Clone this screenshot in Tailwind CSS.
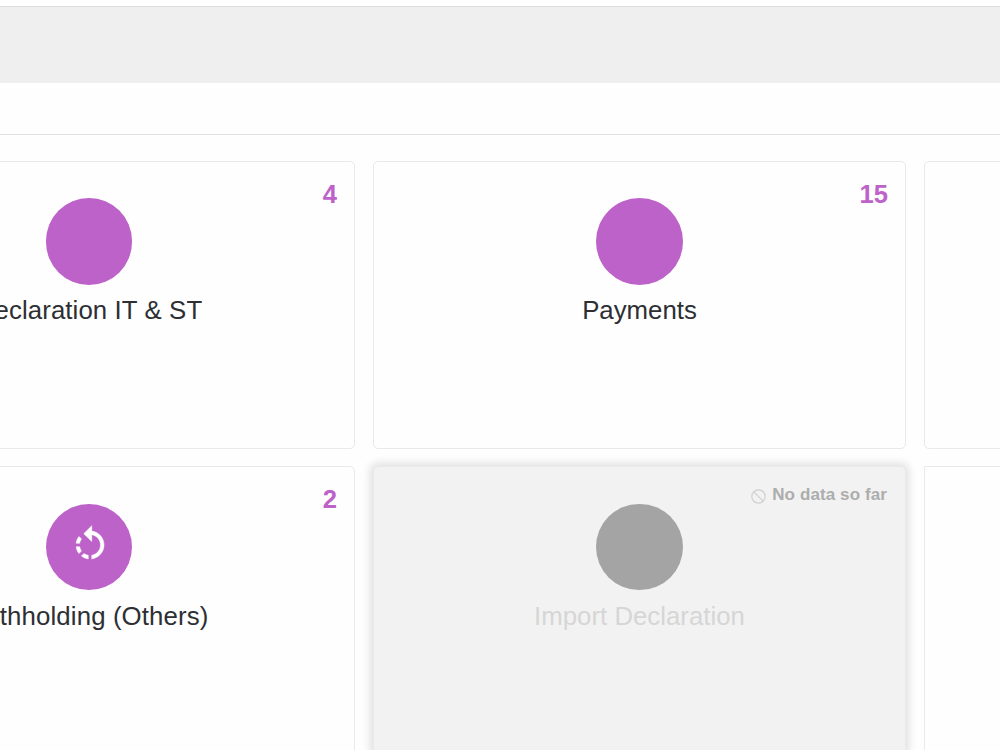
<!DOCTYPE html>
<html lang="en">
<head>
<meta charset="utf-8">
<title>Dashboard</title>
<script src="https://cdn.jsdelivr.net/npm/@tailwindcss/browser@4"></script>
</head>
<body class="h-[750px] w-[1000px] overflow-hidden bg-[#fefefe] font-['Liberation_Sans',Arial,sans-serif] text-[#2d2f33]">
<header class="mt-[6px] h-[77px] border-t border-[#dcdddd] bg-[#efefef]"></header>
<div class="h-[52px] border-b border-[#dddede]"></div>
<main class="-ml-[177px] mt-[26px] grid w-[1634px] grid-cols-[532px_533px_533px] auto-rows-[288px] gap-x-[18px] gap-y-[17px] text-[25.6px] leading-[32px]">
  <section class="relative flex flex-col items-center rounded-[5px] border-[1.5px] border-[#e9e9e9] pt-9">
    <span class="absolute right-[17px] top-4 font-bold text-[#bd62c8]">4</span>
    <div class="size-[86.5px] rounded-full bg-[#bd62c8]"></div>
    <h2 class="mt-[9.5px] text-[25.8px] tracking-[0.1px]">Declaration IT &amp; ST</h2>
  </section>
  <section class="relative flex flex-col items-center rounded-[5px] border-[1.5px] border-[#e9e9e9] pt-9">
    <span class="absolute right-[17px] top-4 font-bold text-[#bd62c8]">15</span>
    <div class="size-[86.5px] rounded-full bg-[#bd62c8]"></div>
    <h2 class="mt-[9.5px] text-[25.8px]">Payments</h2>
  </section>
  <section class="rounded-[5px] border-[1.5px] border-[#e9e9e9]"></section>
  <section class="relative flex flex-col items-center rounded-[5px] border-[1.5px] border-[#e9e9e9] pt-[36.5px]">
    <span class="absolute right-[17px] top-4 font-bold text-[#bd62c8]">2</span>
    <div class="flex size-[86.5px] items-center justify-center rounded-full bg-[#bd62c8]">
      <svg class="mb-[3px] ml-[1px] size-[42px]" viewBox="0 0 24 24" fill="white" stroke="white" stroke-width="0.3"><path d="M7.11 8.53 5.7 7.11C4.8 8.27 4.24 9.61 4.07 11h2.02c.14-.87.49-1.72 1.02-2.47zM6.09 13H4.07c.17 1.39.72 2.73 1.62 3.89l1.41-1.42c-.52-.75-.87-1.59-1.01-2.47zm1.01 5.32c1.16.9 2.51 1.44 3.9 1.61V17.9c-.87-.15-1.71-.49-2.46-1.03L7.1 18.32zM13 4.07V1L8.45 5.55 13 10V6.09c2.84.48 5 2.94 5 5.91s-2.16 5.43-5 5.91v2.02c3.95-.49 7-3.85 7-7.93s-3.05-7.44-7-7.93z"/></svg>
    </div>
    <h2 class="mt-[10px] text-[25.8px] tracking-[0.12px]">Withholding (Others)</h2>
  </section>
  <section class="relative flex flex-col items-center rounded-[5px] border-[1.5px] border-[#e9e9e9] bg-[#f2f2f2] pt-[36.5px] shadow-[0_0_9px_3px_rgba(0,0,0,0.12)]">
    <div class="absolute right-[18px] top-[18px] flex items-center gap-[6px] text-[17px] leading-[20px] font-bold text-[#adadad]">
      <svg class="mt-[2px] size-[15px]" viewBox="0 0 15 15" fill="none" stroke="#d0d0d0" stroke-width="1.2"><circle cx="7.5" cy="7.5" r="6.7"/><path d="m2.8 2.8 9.4 9.4"/></svg>
      <span class="tracking-[0.1px]">No data so far</span>
    </div>
    <div class="size-[86.5px] rounded-full bg-[#a4a4a4]"></div>
    <h2 class="mt-[10px] text-[25.8px] text-[#d6d6d6]">Import Declaration</h2>
  </section>
  <section class="rounded-[5px] rounded-tl-none border-[1.5px] border-[#e9e9e9]"></section>
</main>
</body>
</html>
